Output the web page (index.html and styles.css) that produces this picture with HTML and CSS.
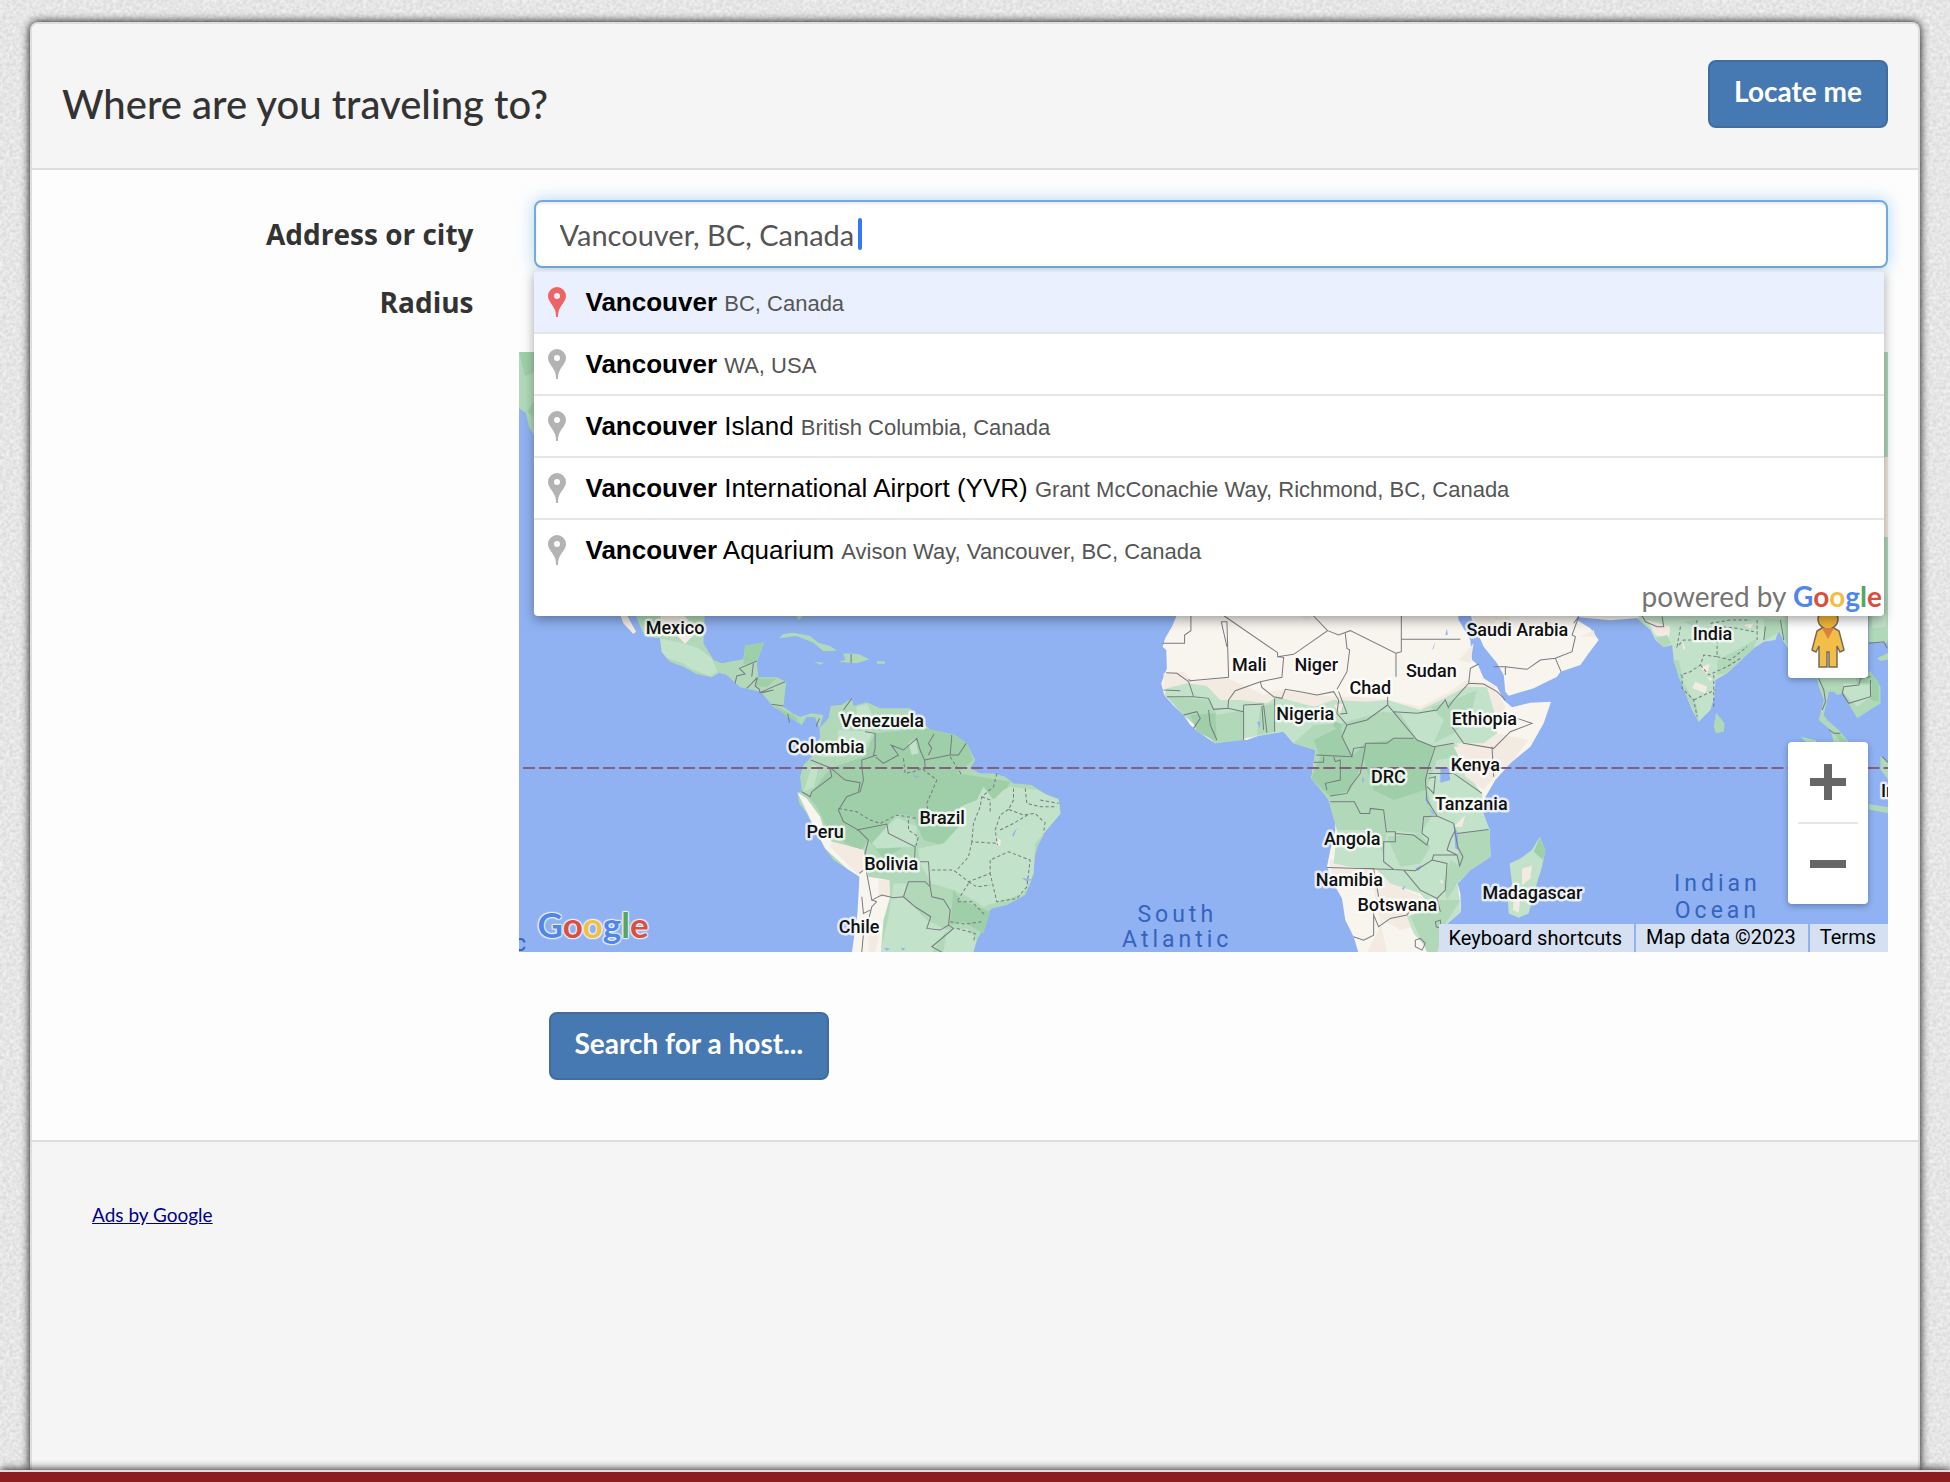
FILE: index.html
```html
<!DOCTYPE html>
<html lang="en">
<head>
<meta charset="utf-8">
<meta name="viewport" content="width=device-width, initial-scale=1">
<title>Where are you traveling to?</title>
<link rel="stylesheet" href="styles.css">
</head>
<body>
<main class="panel">
  <header class="panel-header">
    <h1 class="panel-title">Where are you traveling to?</h1>
    <button class="btn" type="button">Locate me</button>
  </header>

  <form class="panel-body">
    <div class="form-row">
      <label class="form-label" for="address">Address or city</label>
      <div class="form-control">
        <input class="text-input" id="address" type="text" value="Vancouver, BC, Canada" autocomplete="off">
        <span class="caret"></span>
        <div class="suggestions">
          <ul class="suggestion-list">
            <li class="suggestion suggestion-active"><svg class="pin" viewBox="0 0 18 30"><use href="#pin"/></svg><span class="place"><b>Vancouver</b> <small>BC, Canada</small></span></li>
            <li class="suggestion"><svg class="pin" viewBox="0 0 18 30"><use href="#pin"/></svg><span class="place"><b>Vancouver</b> <small>WA, USA</small></span></li>
            <li class="suggestion"><svg class="pin" viewBox="0 0 18 30"><use href="#pin"/></svg><span class="place"><b>Vancouver</b> Island <small>British Columbia, Canada</small></span></li>
            <li class="suggestion"><svg class="pin" viewBox="0 0 18 30"><use href="#pin"/></svg><span class="place"><b>Vancouver</b> International Airport (YVR) <small>Grant McConachie Way, Richmond, BC, Canada</small></span></li>
            <li class="suggestion"><svg class="pin" viewBox="0 0 18 30"><use href="#pin"/></svg><span class="place"><b>Vancouver</b> Aquarium <small>Avison Way, Vancouver, BC, Canada</small></span></li>
          </ul>
          <div class="powered">powered by <span class="google"><span class="g-blue">G</span><span class="g-red">o</span><span class="g-yellow">o</span><span class="g-blue">g</span><span class="g-green">l</span><span class="g-red">e</span></span></div>
        </div>
      </div>
    </div>

    <div class="form-row radius-row">
      <label class="form-label" for="radius">Radius</label>
      <div class="form-control"><input class="radius-input" id="radius" type="range"></div>
    </div>

    <div class="form-row">
      <div class="map">
        <svg class="map-canvas" viewBox="0 0 1369 600" preserveAspectRatio="xMidYMid slice" role="img" aria-label="World map">
          <defs>
            <path id="pin" fill-rule="evenodd" d="M9 0a9 9 0 0 1 9 9c0 5-4.500 8-7 14-.8 2.500-1 4.500-1 7H8c0-2.500-.2-4.500-1-7C4.500 17 0 14 0 9a9 9 0 0 1 9-9zm0 6a3 3 0 1 0 0 6 3 3 0 0 0 0-6z"/>
          </defs>

          <!-- north-west coast -->
          <path class="green" d="M0 0h16v85l-6-10-3-14-7-5z"/>
          <path class="dark" d="M0 0h16v20l-10 4zM8 60l8-12v18z"/>

          <!-- Central and South America -->
          <g transform="translate(-9 248) scale(.33333)">
            <path class="green" d="M380 20V55L405 110 450 115 455 155 480 185 520 200 560 222 605 232 628 218 650 225 690 262 752 275 790 320 830 345 875 375 890 350 915 352 928 385 940 345 905 340 870 350 850 342 820 320 828 245 800 232 745 232 740 188 762 127 705 138 700 178 635 190 610 180 580 130 585 20Z"/>
            <path class="light" d="M450 115 520 130 565 145 605 175 622 215 600 228 540 205 520 190 470 175 455 155Z"/>
            <path class="sand" d="M332 48H352L378 95 370 102 340 70ZM450 48H525L560 95 525 132 500 105 470 100Z"/>
            <path class="dark" d="M705 138 762 127 742 180 700 195ZM735 235H800L770 262 735 258ZM790 315 850 345 870 365 830 350Z"/>
            <path class="green" d="M806 115 820 102 850 98 900 108 925 128 960 138 980 152 940 154 910 128 860 108ZM985 185 1005 180 1000 160 1045 162 1078 178 1040 190ZM912 185 942 188 930 194ZM1100 184H1124V191H1100ZM858 48H878L866 60Z"/>
            <path class="green" d="M928 385 930 410 905 470 880 495 870 530 875 575 862 577 868 610 890 640 915 690 945 745 970 780 1010 805 1048 830 1050 900 1042 940 1040 1000 1025 1060H1380L1395 1030 1420 985V950L1445 925 1490 915 1545 885 1560 850 1570 820 1574 770 1582 740 1605 695 1652 640 1645 595 1610 585 1565 555 1510 550 1485 530 1450 520 1410 520 1380 505 1395 480 1370 430 1330 402 1275 402 1245 375 1215 345 1200 325 1110 325 1070 307 1030 318 1025 295 995 314 962 318 955 355Z"/>
            <path class="light" d="M1040 320 1070 312 1090 350 1040 355ZM985 390 1090 395 1070 430 1000 470 930 470 980 430ZM905 495 925 500 912 560 880 575 895 530Z"/>
            <path class="dark" d="M1095 400 1245 385 1330 403 1370 430 1390 480 1340 520 1410 530 1500 545 1470 600 1430 590 1370 615 1340 650 1370 680 1345 715 1310 740 1240 720 1210 650 1160 640 1130 680 1175 745 1120 775 1075 720 1050 755 960 700 920 620 895 590 960 505 1060 470ZM1330 870 1350 900 1440 935 1420 1000 1360 965 1320 975Z"/>
            <path class="light" d="M1195 430 1215 415 1225 460 1205 465ZM1130 680 1160 652 1220 680 1215 740 1100 745 1085 730ZM1225 745 1300 730 1360 665 1350 620 1400 600 1420 560 1450 600 1480 570 1500 560 1580 570 1645 600 1650 640 1605 695 1575 730 1570 820 1540 880 1480 900 1420 920 1390 900 1330 870 1265 850 1230 790ZM1150 850 1190 850 1180 890 1250 960 1310 990 1265 1056H1110L1135 950ZM1310 990 1370 985 1400 1020 1390 1056H1300Z"/>
            <path class="desert" d="M862 577 890 595 930 650 945 700 965 725 1060 750 1075 830 1135 840 1140 890 1120 960 1112 1060H1025L1042 940 1048 830 1010 805 945 745 900 655Z"/>
            <path class="sand" d="M965 725 1060 750 1062 800 1045 825 960 740ZM1105 840H1138L1140 890 1105 890ZM1075 960 1110 1000 1095 1056 1075 1056ZM1462 715 1472 720 1470 738 1460 735Z"/>
            <path class="water" d="M1506 705 1520 683 1518 690 1510 710ZM1535 833 1565 838 1550 845ZM1122 1043 1140 1046 1130 1052ZM1172 1042 1186 1045 1178 1052ZM1210 525 1230 530 1215 533Z"/>
            <path class="edge" d="M1025 295 1000 330M1065 395 1095 400 1095 445 1090 465 1120 490 1165 465 1143 435 1180 450 1220 415 1230 450 1243 480 1245 500M1243 480 1320 465 1345 465 1368 430M1320 465 1325 405M1255 465 1265 445 1255 430 1272 402M1100 465 1055 480V500L1060 540 1050 575 1010 590 985 630 1000 665 1045 690 1075 720 1065 760 1070 820 1085 900 1115 885 1150 893 1180 890 1195 845 1245 845 1260 860 1255 785 1230 785M1040 690 1130 672 1135 700 1215 740 1213 785M902 480 960 503 1005 540 1050 548 1045 575M960 505 965 530 905 575 900 590 875 575M1055 890 1060 940 1080 930M1180 890 1215 920 1262 950 1250 985 1290 990 1315 975 1320 930 1300 898 1265 890 1258 845M1315 975 1330 985 1265 1040 1295 1056M1100 905 1085 920 1075 960 1060 1000 1055 1056M1085 900 1100 905M1048 820 1060 810M1023 162V188M833 342 838 368M928 355 918 380M675 250 680 228 705 222 688 205 740 183M725 230 730 190M710 265 725 250 742 232 735 258 748 268 750 278 785 262 825 245M755 278 790 270M785 313 820 318"/>
            <path class="edge dash" d="M1180 475 1185 520 1210 515 1235 505 1280 540 1250 610 1255 655M1320 470 1355 525M985 625 1040 635 1080 660 1110 670 1160 645 1220 655M1195 660V690L1225 710 1215 745M1460 520 1450 560 1415 590 1410 620 1390 670 1385 725 1460 730M1415 590 1440 600V640M1495 628 1470 645 1455 690 1462 735M1510 565V600L1495 628 1540 645 1575 640 1600 665M1545 565 1550 610 1590 620 1640 620M1590 600 1645 610M1470 690 1510 670 1560 640M1605 665 1600 700M1385 725 1375 770 1340 810M1265 810 1330 810 1375 845 1440 820V780L1495 755 1560 780 1550 860 1520 895 1460 905 1440 820M1375 845 1400 860 1440 855M1375 850 1340 905 1385 905 1425 945M1320 965 1365 972 1415 965M1340 985 1395 1000 1390 1025"/>
          </g>

          <!-- Africa and Arabia -->
          <g transform="translate(581 248) scale(.33333)">
            <path class="desert" d="M230 20 228 50 215 80 195 115 187 140 198 150 200 205 183 250 192 285 218 315 250 345 270 375 300 400 345 430 395 418 440 420 495 400 550 395 580 430 630 425 648 450 640 490 633 535 665 570 685 600 705 650 705 690 690 750 680 800 700 850 725 895 735 960 760 1010 775 1060H1015L1030 980 1082 935 1080 880 1072 850 1110 810 1170 770 1168 690 1145 640 1150 600 1185 540 1230 490 1290 440 1330 370 1352 305 1290 308 1235 322 1210 300 1190 260 1150 235 1133 195 1115 180 1110 120 1075 60 1070 20Z"/>
            <path class="sand" d="M190 220 250 215 280 245 380 235 440 260 490 285 530 270 700 290 770 290 870 300 960 320 1040 280 1100 240 1180 255 1215 320 1190 400 1285 420 1230 490 1150 560 1100 520 1080 450 900 400 500 340 250 300 190 265ZM600 48H645L620 60ZM1120 130 1075 180 1110 190ZM685 780H750L880 850 980 900 1030 960 900 990 850 960 800 1056H860L820 870 700 840Z"/>
            <path class="light" d="M192 285 200 265 260 250 320 258 360 300 420 300 500 310 530 290 640 320 700 300 800 305 860 300 960 330 1040 290 1095 260 1160 262 1180 330 1190 400 1150 430 1070 430 1090 500 1130 560 1145 580 1150 640 1168 690 1170 770 1110 810 1072 850 1082 935 1030 980 1015 1056H990L940 1000 920 950 990 920 960 880 870 850 830 810 750 800 700 790 710 690 685 600 640 530 645 450 580 430 550 395 345 430 250 345Z"/>
            <path class="green" d="M200 290 330 300 350 345 430 330 430 420 345 430 250 345ZM480 320 520 310 525 395 470 405ZM640 375 720 370 850 335 900 340 950 420 1000 440 1060 430 1075 470 1010 480 980 560 1000 640 960 700 860 690 850 760 800 690 710 690 685 600 633 535 645 450 580 430ZM990 320 1060 300 1130 270 1110 350 1060 400 1000 430 1030 360ZM860 710 960 700 990 740 960 790 900 800ZM1070 700 1168 690 1170 770 1110 810 1070 850 1040 900 1030 850 1050 780 1075 795ZM930 950 1020 900 1080 900 1030 980 1010 1056H980Z"/>
            <path class="dark" d="M640 420 720 380 735 430 755 470 795 430 870 420 940 415 1000 440 985 500 975 570 880 600 820 570 790 480 750 570 690 590 633 535 660 470ZM270 345 345 340 350 425 290 395ZM700 360 725 375 720 390 700 380Z"/>
            <path class="sand" d="M1060 440 1175 440 1190 520 1150 570 1095 530 1080 480ZM1060 680 1095 645 1085 680ZM1215 430 1180 470 1230 490 1270 440ZM1020 838 1030 845 1022 852ZM700 315 730 310 720 340Z"/>
            <path class="water" d="M1020 505 1045 505 1050 540 1020 548ZM978 580 985 620 1005 645 995 640 975 600ZM1060 670 1072 700 1075 750 1065 745ZM995 150 1005 125 1000 145ZM1035 105 1040 85 1042 105ZM470 365 480 365 478 385ZM905 865 915 855 910 870ZM945 805 965 795 955 812ZM785 530 792 540 787 550Z"/>
            <path class="desert" d="M1105 20 1115 60 1150 140 1190 190 1210 225 1215 275 1225 287 1300 265 1370 230 1380 215 1440 195 1465 160 1495 120 1470 85 1430 60 1440 20Z"/>
            <path class="sand" d="M1110 20 1120 60 1150 105 1190 60 1230 60 1220 20ZM1440 110 1480 90 1485 110Z"/>
            <path class="light" d="M1318 710 1335 750 1325 800 1300 880 1285 940 1255 953 1225 940 1222 890 1235 850 1228 790 1260 775 1295 750Z"/>
            <path class="dark" d="M1318 712 1335 750 1328 780 1300 755Z"/>
            <path class="sand" d="M1265 805 1295 797 1290 835 1265 855ZM1240 900 1260 895 1255 938 1238 930Z"/>
            <path class="edge" d="M272 48V92L253 105V130H187M363 65H380L385 232 270 242 265 238M363 65 380 140M372 48 532 158V170L580 163 682 92 640 48M682 92 715 105 750 92 887 160V230M735 100 740 145 748 150 740 215 710 268M903 48V118H1080M903 118V155L887 160M532 170 550 172 545 232 480 245 405 272 385 300 383 325M198 218 230 220 265 245 280 290 200 290M280 290 325 295 340 328 383 325 430 335M190 270 240 272M480 245 485 262 520 290 545 295 555 268 600 275 650 285 700 275 715 300 710 340 740 375 725 410 755 470M490 315 500 398M523 295V395M430 315V420M430 315 490 312M485 318 490 390M715 275 740 340 720 342M740 375 800 360 862 315 950 420 1000 440 1060 430M862 315V290M880 335 950 340 1010 330 1035 300 1045 325M795 430 860 430 880 415 940 415M1045 320 1060 300 1105 250 1110 205 1135 192M1105 250 1150 252 1190 275 1215 300M1055 380 1090 430 1180 445 1230 395 1295 370 1250 355M1065 350 1055 370M795 430V440L760 445 755 470 648 465M795 440 780 520 750 560 740 580 690 588M700 470 705 485 720 480 720 540 675 550 680 570M670 470V487H640M690 605H762L780 640 808 640 810 625 850 630 858 695 885 695V725H850V785L880 808 680 802M885 700 940 705 980 735 985 715 965 700 970 650 1010 648 1060 670M1010 648 980 600 975 540 985 500 1005 440M985 520 1060 520 1145 580M985 535 1005 530 1000 580 980 560M1070 700 1165 688M1060 670 1072 740 1088 770 1078 798 1070 765 1000 765 995 780 945 812 880 808M995 780 1040 790 1035 870 1010 895 960 870 910 810M1065 690 1050 720 1040 750 1070 765M780 805 820 805 835 890M820 930V1005L790 1020 760 1010M820 945 835 980 870 955 920 945 930 930M1010 895 1020 935M1005 965 1020 960 1022 985 1008 980ZM945 1020 960 1015 975 1030 965 1050 945 1040ZM250 345 290 335 300 355 280 385M325 330 330 375 350 420M1175 440 1180 530M1180 200 1215 200 1280 208 1320 180 1365 175 1415 155 1425 110 1415 105 1435 50M1365 175 1382 215M1215 200V225"/>
          </g>

          <!-- South and South-East Asia -->
          <g transform="translate(1031 208) scale(.33333)">
            <path class="light" d="M260 140V175L300 210 315 240 340 262 365 255 370 300 385 350 405 400 425 450 445 485 480 450 492 410 495 360 530 340 610 265 640 245 675 240 685 210 700 245 716 270V140Z"/>
            <path class="desert" d="M85 140V172L180 181 265 174V140Z"/>
            <path class="sand" d="M290 180 360 200 355 235 315 225ZM435 365 470 380 465 400 425 385ZM450 320 478 312 470 345ZM395 240 405 265 398 270ZM470 350 485 355 480 365ZM580 195 610 190 600 205Z"/>
            <path class="green" d="M315 235 350 225 362 250 340 262ZM368 300 385 300 400 370 440 440 445 485 405 400ZM500 300 560 270 620 235 610 265 530 340 500 345ZM400 185 440 180 430 200ZM640 175 716 180V265L690 215 640 243ZM497 458 522 490 520 515 497 520 490 500ZM955 130H1014V225L1010 250 955 245ZM980 295 1014 278V298L990 303ZM795 330 805 380 820 420 805 480 840 510 850 546H895L865 510 830 480 820 465 830 420 835 395 850 395 860 405 880 400 900 440 920 475 990 430 990 380 960 335ZM750 530 795 540 800 548H770ZM990 588 1014 605V660L990 628ZM955 732 1014 742V760L955 748Z"/>
            <path class="light" d="M880 370 955 375 960 410 920 440 880 400ZM965 170 1010 150 1005 200 965 205Z"/>
            <path class="dark" d="M910 340 955 335 985 365 985 425 960 420 965 370 920 370ZM845 512 865 520 890 545 870 545Z"/>
            <path class="edge" d="M85 170 70 190M260 140 285 185 320 200 340 200 335 170M800 345 820 390 825 425 815 450M880 380 925 375 930 355 960 350M880 380 875 400 895 430 960 410V360M640 240 645 200M690 180 700 240M835 508 850 520 870 520M955 250 1000 245 1010 265M995 590 1014 608"/>
            <path class="edge dash" d="M390 200 380 260 400 240 430 240 500 240 510 200 560 205 610 215M500 240V290L460 285 450 315 420 335 390 345M500 290 540 300 590 260M450 315 475 345 530 320 570 295M395 345 395 385 430 420 440 470M430 420 460 405 495 390M480 190 540 180 600 180M620 180 620 240M490 345 490 440M440 180 430 240"/>
          </g>

          <!-- far east strip -->
          <path class="green" d="M1362 0H1370V262H1362Z"/>
          <path class="sand" d="M1362 105H1370V185H1362Z"/>

          <path class="equator" d="M4 416H1369"/>

          <g class="country">
            <text x="156" y="282">Mexico</text>
            <text x="363" y="375">Venezuela</text>
            <text x="307" y="401">Colombia</text>
            <text x="423" y="472">Brazil</text>
            <text x="306" y="486">Peru</text>
            <text x="372" y="518">Bolivia</text>
            <text x="340" y="581">Chile</text>
            <text x="730" y="319">Mali</text>
            <text x="797" y="319">Niger</text>
            <text x="912" y="325">Sudan</text>
            <text x="851" y="342">Chad</text>
            <text x="786" y="368">Nigeria</text>
            <text x="965" y="373">Ethiopia</text>
            <text x="998" y="284">Saudi Arabia</text>
            <text x="956" y="419">Kenya</text>
            <text x="869" y="431">DRC</text>
            <text x="952" y="458">Tanzania</text>
            <text x="833" y="493">Angola</text>
            <text x="830" y="534">Namibia</text>
            <text x="878" y="559">Botswana</text>
            <text x="1013" y="547">Madagascar</text>
            <text x="1193" y="288">India</text>
            <text x="1369" y="445">In</text>
          </g>
          <g class="ocean">
            <text x="658" y="570">South</text>
            <text x="658" y="595">Atlantic</text>
            <text x="1198" y="539">Indian</text>
            <text x="1198" y="566">Ocean</text>
            <text x="3" y="599">c</text>
          </g>
        </svg>

        <div class="map-logo google"><span class="g-blue">G</span><span class="g-red">o</span><span class="g-yellow">o</span><span class="g-blue">g</span><span class="g-green">l</span><span class="g-red">e</span></div>

        <div class="map-controls">
          <button class="map-button pegman" type="button" aria-label="Street View">
            <svg viewBox="0 0 36 60" width="36" height="60">
              <path d="M12 20 7 23 2 42 6 44 9 38V59H17V44H19V59H27V38L30 44 34 42 29 23 24 20Z" fill="#f4bd48" stroke="#736b5c" stroke-width="1.500"/>
              <circle cx="18" cy="11" r="10" fill="#f4b63a" stroke="#736b5c" stroke-width="1.500"/>
              <path d="M12 20H24L18 31Z" fill="#d8843e"/>
            </svg>
          </button>
          <div class="zoom">
            <button class="map-button" type="button" aria-label="Zoom in"><svg viewBox="0 0 36 36" width="36" height="36"><path fill="#666" d="M14 0h8v14h14v8H22v14h-8V22H0v-8h14z"/></svg></button>
            <button class="map-button" type="button" aria-label="Zoom out"><svg viewBox="0 0 36 36" width="36" height="36"><path fill="#666" d="M0 14h36v8H0z"/></svg></button>
          </div>
        </div>

        <div class="map-legal">
          <button class="legal-item" type="button">Keyboard shortcuts</button>
          <span class="legal-item">Map data ©2023</span>
          <a class="legal-item" href="#terms">Terms</a>
        </div>
      </div>
    </div>

    <div class="form-row actions">
      <div class="action-cell"><button class="btn" type="submit">Search for a host...</button></div>
    </div>
  </form>

  <section class="panel-footer">
    <a class="ads-link" href="#ads">Ads by Google</a>
  </section>
</main>
<footer class="site-footer"></footer>
</body>
</html>
```
FILE: styles.css
```css
* {
  box-sizing: border-box;
}

body {
  margin: 0;
  min-height: 100vh;
  display: flex;
  flex-direction: column;
  font-family: Lato, "Open Sans", sans-serif;
  font-size: 28px;
  color: #333;
  background-color: #e5e5e5;
  background-image: url("data:image/svg+xml,%3Csvg xmlns='http://www.w3.org/2000/svg' width='300' height='300'%3E%3Cfilter id='n' x='0' y='0' width='100%25' height='100%25' color-interpolation-filters='sRGB'%3E%3CfeTurbulence type='fractalNoise' baseFrequency='.3' numOctaves='3' stitchTiles='stitch'/%3E%3CfeColorMatrix values='.16 0 0 0 .82 .16 0 0 0 .82 .16 0 0 0 .82 0 0 0 0 1'/%3E%3C/filter%3E%3Crect width='300' height='300' filter='url(%23n)'/%3E%3C/svg%3E");
}

.panel {
  flex: 1;
  display: flex;
  flex-direction: column;
  margin: 22px 30px 0;
  background: #fdfdfd;
  border: 2px solid #ddd;
  border-bottom: 0;
  border-radius: 8px 8px 0 0;
  box-shadow: 0 0 10px #000;
}

.panel-header {
  display: flex;
  justify-content: space-between;
  align-items: flex-start;
  padding: 36px 30px 30px;
  background: #f5f5f5;
  border-bottom: 2px solid #ddd;
  border-radius: 6px 6px 0 0;
}

.panel-title {
  margin: 0;
  padding-top: 10px;
  font-size: 40px;
  line-height: 68px;
  font-weight: 500;
}

.btn {
  height: 68px;
  padding: 0 24px 6px;
  font-family: inherit;
  font-size: 28px;
  font-weight: 700;
  color: #fff;
  background: #4679b2;
  border: 2px solid #3f6da1;
  border-radius: 8px;
}

.panel-body {
  padding: 30px 0 60px;
}

.form-row {
  display: grid;
  grid-template-columns: 1fr 3fr;
}

.form-label {
  padding-right: 30px;
  font-family: "Open Sans", sans-serif;
  font-weight: 700;
  line-height: 68px;
  text-align: right;
}

.form-control {
  position: relative;
  padding: 0 30px;
}

.text-input {
  display: block;
  width: 100%;
  height: 68px;
  padding: 0 24px;
  font-family: inherit;
  font-size: 29px;
  color: #555;
  background: #fff;
  border: 2px solid #73a9e0;
  border-radius: 8px;
  outline: 0;
  box-shadow: inset 0 2px 2px rgba(0, 0, 0, .075), 0 0 16px rgba(102, 175, 233, .5);
}

.caret {
  position: absolute;
  left: 354px;
  top: 18px;
  width: 4px;
  height: 32px;
  border-radius: 2px;
  background: #3478f6;
}

.suggestions {
  position: absolute;
  z-index: 2;
  top: 70px;
  left: 30px;
  right: 34px;
  background: #fff;
  border-radius: 0 0 4px 4px;
  box-shadow: 0 4px 12px rgba(0, 0, 0, .35);
  font-family: "Liberation Sans", Arial, sans-serif;
}

.suggestion-list {
  margin: 0;
  padding: 0;
  list-style: none;
}

.suggestion {
  display: flex;
  align-items: center;
  gap: 20px;
  height: 62px;
  padding: 0 14px;
  border-top: 2px solid #e6e6e6;
  color: #000;
  font-size: 26px;
}

.suggestion small {
  font-size: 22px;
  color: #555;
}

.suggestion-active {
  background: #eaf0fd;
}

.pin {
  width: 18px;
  height: 30px;
  fill: #b3b3b3;
}

.suggestion-active .pin {
  fill: #ee6363;
}

.powered {
  height: 36px;
  padding-right: 2px;
  font-family: Lato, sans-serif;
  font-size: 28px;
  line-height: 32px;
  text-align: right;
  color: #757575;
}

.google {
  font-family: Lato, sans-serif;
  font-weight: 700;
}

.g-blue { color: #4f86ec; }
.g-red { color: #d9503f; }
.g-yellow { color: #f2bf42; }
.g-green { color: #58a55c; }

.radius-row {
  height: 84px;
}

.radius-input {
  width: 50%;
  margin: 24px 0;
}

.map {
  position: relative;
  grid-column: 2;
  height: 600px;
  margin: 0 30px 0 15px;
  overflow: hidden;
  background: #90b2f2;
  font-family: Roboto, sans-serif;
}

.map-canvas {
  display: block;
  width: 100%;
  height: 100%;
}

.water { fill: #90b2f2; }
.desert { fill: #f8f5ef; }
.sand { fill: #f3ebe1; }
.light { fill: #c3e2ca; }
.green { fill: #b1d9b9; }
.dark { fill: #9fcfa8; }

.edge {
  fill: none;
  stroke: #777b80;
  stroke-width: 3px;
}

.dash {
  stroke-dasharray: 10 7;
}

.equator {
  fill: none;
  stroke: #84607e;
  stroke-width: 2px;
  stroke-dasharray: 12 4;
}

.country text {
  font-size: 18px;
  font-weight: 500;
  text-anchor: middle;
  fill: #111;
  stroke: rgba(255, 255, 255, .75);
  stroke-width: 5px;
  stroke-linejoin: round;
  paint-order: stroke;
}

.ocean text {
  font-size: 23px;
  letter-spacing: 4px;
  text-anchor: middle;
  fill: #3563bd;
}

.map-logo {
  position: absolute;
  left: 19px;
  bottom: 8px;
  font-size: 35px;
  line-height: 40px;
  text-shadow: 0 0 2px #fff, 1px 1px 1px #dfe8fb, -1px -1px 1px #dfe8fb, 1px -1px 1px #dfe8fb, -1px 1px 1px #dfe8fb;
}

.map-controls {
  position: absolute;
  right: 20px;
  bottom: 48px;
  display: grid;
  gap: 64px;
}

.map-button {
  display: grid;
  place-items: center;
  width: 80px;
  height: 80px;
  padding: 0;
  border: 0;
  border-radius: 4px;
  background: none;
}

.pegman,
.zoom {
  border-radius: 4px;
  background-color: #fff;
  box-shadow: 0 2px 6px rgba(0, 0, 0, .3);
}

.zoom {
  display: grid;
  gap: 2px;
  background: linear-gradient(#e6e6e6, #e6e6e6) center / 60px 2px no-repeat #fff;
}

.map-legal {
  position: absolute;
  right: 0;
  bottom: 0;
  display: flex;
  gap: 2px;
}

.legal-item {
  height: 28px;
  padding: 0 12px 0 10px;
  border: 0;
  font-family: Roboto, sans-serif;
  font-size: 20px;
  line-height: 26px;
  color: #000;
  background: #d6e0f3;
  text-decoration: none;
}

.actions {
  padding-top: 60px;
}

.action-cell {
  grid-column: 2;
  padding-left: 45px;
}

.panel-footer {
  flex: 1;
  padding: 52px 60px;
  background: #f5f5f5;
  border-top: 2px solid #ddd;
}

.ads-link {
  display: inline-block;
  font-size: 19px;
  line-height: 28px;
  color: #00008b;
}

.site-footer {
  position: relative;
  height: 12px;
  background: #8b1d21;
  border-top: 2px solid #ddd;
  box-shadow: 0 0 10px #000;
}
```
